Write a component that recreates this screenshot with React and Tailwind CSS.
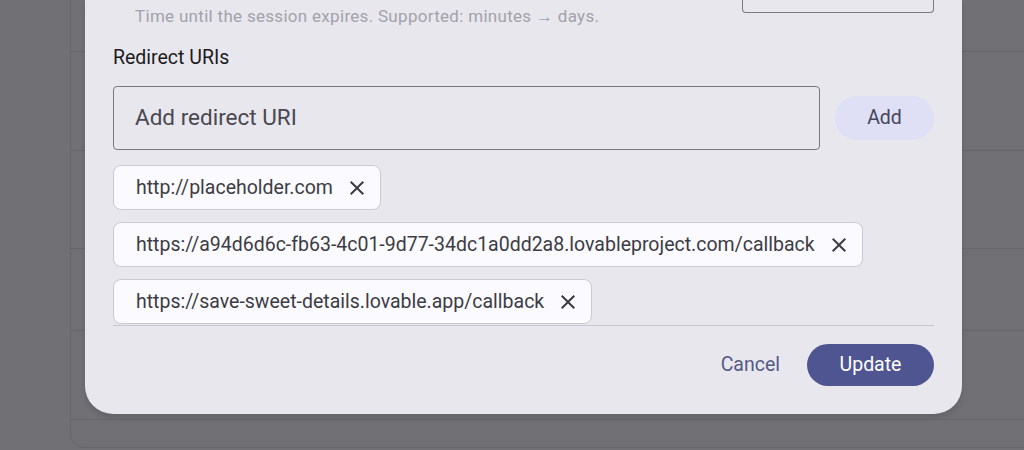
const uris = [
  "http://placeholder.com",
  "https://a94d6d6c-fb63-4c01-9d77-34dc1a0dd2a8.lovableproject.com/callback",
  "https://save-sweet-details.lovable.app/callback",
];

function CloseIcon() {
  return (
    <svg viewBox="0 0 24 24" className="h-6 w-6 fill-[#3d3c44]">
      <path d="M19 6.41L17.59 5 12 10.59 6.41 5 5 6.41 10.59 12 5 17.59 6.41 19 12 13.41 17.59 19 19 17.59 13.41 12z" />
    </svg>
  );
}

function UriChip({ uri }) {
  return (
    <div className="flex h-[45px] w-fit items-center gap-[12px] rounded-[8px] border border-[#cbc9d1] bg-[#fbfaff] pl-[22px] pr-[11px] text-[19.5px] leading-6 text-[#3d3c44]">
      <span>{uri}</span>
      <CloseIcon />
    </div>
  );
}

export default function App() {
  return (
    <div
      className="relative h-[450px] w-[1024px] overflow-hidden bg-[#717075]"
      style={{ fontFamily: "Roboto, 'Noto Sans', sans-serif" }}
    >
      {/* page behind the scrim */}
      <div className="pl-[70px]">
        <div className="h-[448px] rounded-bl-[14px] border-b border-l border-[#67666b] bg-[#717075]">
          <div className="h-[52px] border-b border-[#67666b]" />
          <div className="h-[99px] border-b border-[#67666b]" />
          <div className="h-[98px] border-b border-[#67666b]" />
          <div className="h-[82px] border-b border-[#67666b]" />
          <div className="h-[89px] border-b border-[#67666b]" />
        </div>
      </div>

      {/* dialog */}
      <div className="absolute left-[85px] top-0 w-[877px] rounded-b-[28px] bg-[#e8e7ee] px-[28px] pb-[28px] shadow-[0_4px_6px_rgba(0,0,0,0.12)]">
        <div className="flex items-start justify-between">
          <p className="pl-[22px] pt-[6px] text-[17px] leading-5 tracking-[0.3px] text-[#a3a2aa]">
            Time until the session expires. Supported: minutes → days.
          </p>
          <div className="h-[13px] w-[192px] rounded-b-[4px] border-x border-b border-[#7a7880]" />
        </div>

        <p className="mt-[20px] text-[19.5px] leading-6 text-[#1d1b20]">Redirect URIs</p>

        <div className="mt-[16px] flex items-center gap-[15px]">
          <div className="flex h-[64px] flex-1 items-center rounded-[4px] border border-[#79777f] px-[21px] text-[22.5px] text-[#4a4850]">
            Add redirect URI
          </div>
          <button className="h-[44px] w-[99px] rounded-full bg-[#dfdff5] text-[19.5px] text-[#46465c]">
            Add
          </button>
        </div>

        <div className="mt-[15px] flex flex-col gap-[12px] border-b border-[#c9c8cf] pb-px">
          {uris.map((u) => (
            <UriChip key={u} uri={u} />
          ))}
        </div>

        <div className="mt-[18px] flex items-center justify-end gap-[27px]">
          <button className="text-[19.5px] text-[#545987]">Cancel</button>
          <button className="h-[42px] w-[127px] rounded-full bg-[#4f5590] text-[19.5px] text-white">
            Update
          </button>
        </div>
      </div>
    </div>
  );
}
